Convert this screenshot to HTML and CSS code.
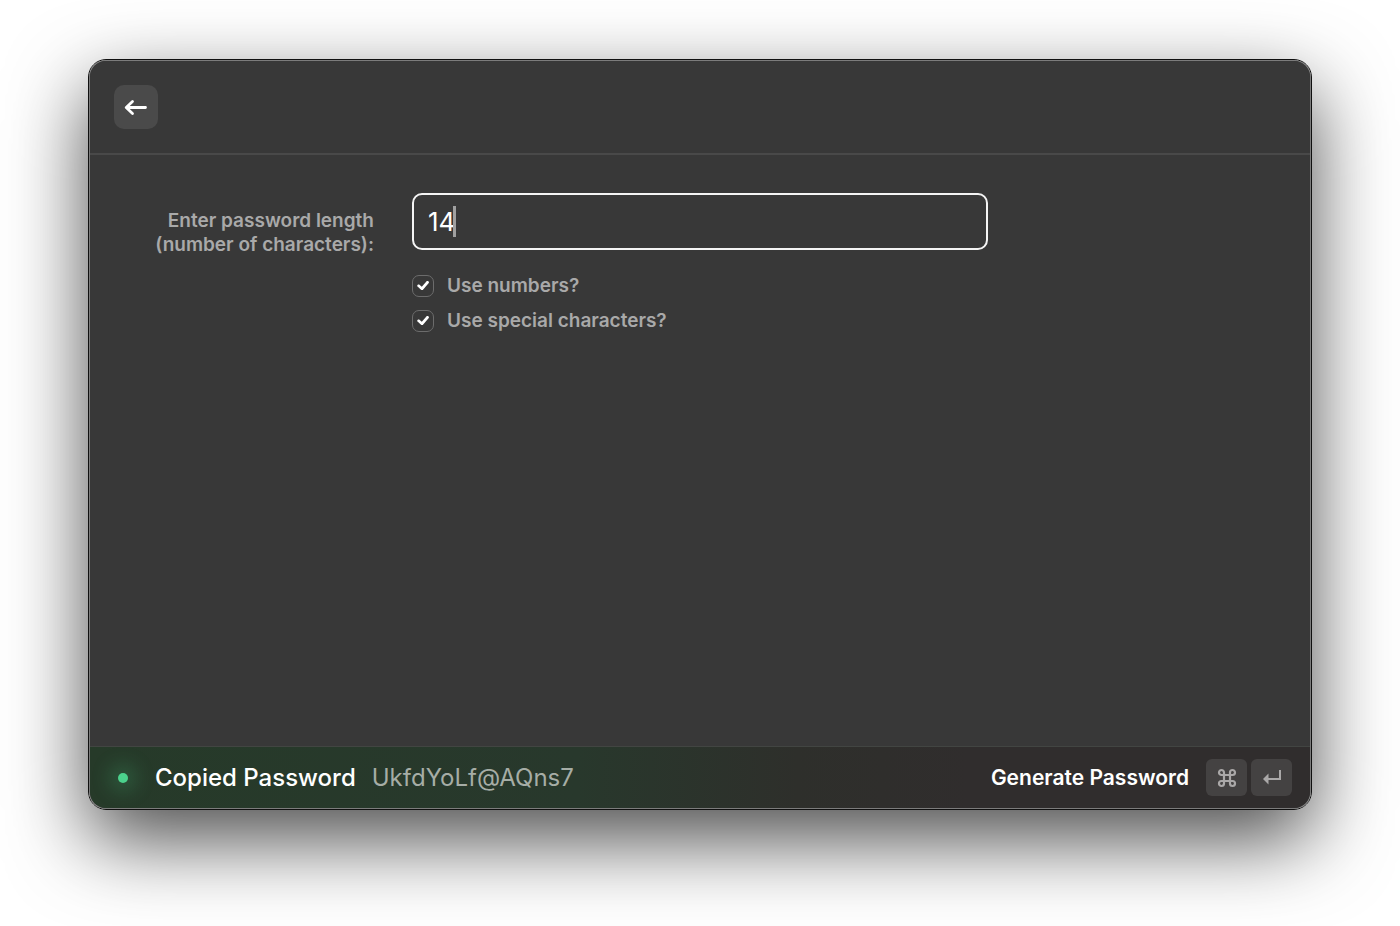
FILE: index.html
```html
<!DOCTYPE html>
<html lang="en">
<head>
    <meta charset="UTF-8">
    <meta name="viewport" content="width=device-width, initial-scale=1.0">
    <title>Generate Password</title>
    <link rel="stylesheet" href="styles.css">
</head>
<body>

<main class="window">
    <header class="top-bar">
        <button type="button" class="back-button" aria-label="Back">
            <svg width="24" height="18" viewBox="0 0 24 18" fill="none" stroke="currentColor" stroke-width="2.8" stroke-linecap="round" stroke-linejoin="round">
                <path d="M21.5 9.5H2.5M8.5 3.5L2.2 9.5l6.3 6"/>
            </svg>
        </button>
    </header>

    <form id="passwordForm" class="password-form">
        <label for="length" class="length-label">Enter password length<br>(number of characters):</label>
        <div class="fields">
            <div class="length-box">
                <input type="text" id="length" class="length-input" value="14" inputmode="numeric">
                <span class="caret"></span>
            </div>
            <div class="check-row">
                <input type="checkbox" id="useNumbers" checked>
                <label for="useNumbers">Use numbers?</label>
            </div>
            <div class="check-row">
                <input type="checkbox" id="useSpecial" checked>
                <label for="useSpecial">Use special characters?</label>
            </div>
        </div>
    </form>

    <footer class="action-bar">
        <span class="status-dot"></span>
        <span class="status-title">Copied Password</span>
        <span class="status-value">UkfdYoLf@AQns7</span>
        <button type="submit" form="passwordForm" class="generate-button">
            <span class="generate-text">Generate Password</span>
            <span class="key">
                <svg width="20" height="20" viewBox="0 0 20 20" fill="none" stroke="currentColor" stroke-width="2.2">
                    <path d="M7 7v6M13 7v6M7 7h6M7 13h6M7 7H4.5A2.5 2.5 0 1 1 7 4.5zM13 7V4.5A2.5 2.5 0 1 1 15.5 7zM7 13v2.5A2.5 2.5 0 1 1 4.5 13zM13 13h2.5A2.5 2.5 0 1 1 13 15.5z"/>
                </svg>
            </span>
            <span class="key">
                <svg width="20" height="18" viewBox="0 0 20 18" fill="none" stroke="currentColor" stroke-width="2">
                    <path d="M18 1v9H5"/>
                    <path d="M6.5 4.5L1 10l5.5 5.5z" fill="currentColor" stroke="none"/>
                </svg>
            </span>
        </button>
    </footer>
</main>

<script>
    document.getElementById("passwordForm").addEventListener("submit", function(event) {
        event.preventDefault();
    });
</script>

</body>
</html>
```
FILE: styles.css
```css
* {
    box-sizing: border-box;
}
body {
    margin: 0;
    padding: 59px 88px 116px;
    min-height: 100vh;
    display: flex;
    background: white;
    font-family: Inter, sans-serif;
    color: white;
}
.window {
    flex: 1;
    display: flex;
    flex-direction: column;
    overflow: hidden;
    padding: 1px;
    border: 1px solid #101010;
    border-radius: 18px;
    background-image: linear-gradient(#383838, #383838), linear-gradient(#7c7c7c, #7c7c7c);
    background-clip: content-box, padding-box;
    box-shadow: 0 30px 80px rgba(0, 0, 0, 0.7);
}
.top-bar {
    height: 94px;
    padding: 24px;
    border-bottom: 2px solid #494949;
    border-radius: 16px 16px 0 0;
    background: #383838;
}
.back-button {
    display: flex;
    align-items: center;
    justify-content: center;
    width: 44px;
    height: 44px;
    padding: 0;
    border: none;
    border-radius: 10px;
    background: #4a4a4a;
    color: white;
    cursor: pointer;
}
.password-form {
    flex: 1;
    display: grid;
    grid-template-columns: 284px 576px;
    gap: 38px;
    align-items: start;
    padding-top: 38px;
    font-size: 19px;
    line-height: 24px;
    font-weight: 600;
    color: #a9a9a9;
}
.length-label {
    padding-top: 16px;
    text-align: right;
}
.length-box {
    position: relative;
    margin-bottom: 18px;
}
.length-input {
    display: block;
    width: 100%;
    height: 57px;
    padding: 0 14px;
    border: 2px solid #f4f4f4;
    border-radius: 10px;
    outline: none;
    background: transparent;
    color: white;
    font-family: inherit;
    font-size: 26px;
}
.caret {
    position: absolute;
    left: 41px;
    top: 13px;
    width: 3px;
    height: 31px;
    background: #a0a0a0;
}
.check-row {
    display: flex;
    align-items: center;
    gap: 13px;
    height: 35px;
}
.check-row input {
    appearance: none;
    width: 22px;
    height: 22px;
    margin: 0;
    display: grid;
    place-items: center;
    border: 1px solid #6c6c6c;
    border-radius: 7px;
}
.check-row input:checked::before {
    content: "";
    width: 12px;
    height: 10px;
    background: white;
    clip-path: polygon(0 56%, 8% 40%, 18% 40%, 40% 62%, 82% 6%, 92% 4%, 100% 14%, 98% 24%, 48% 94%, 36% 96%);
}
.action-bar {
    display: flex;
    align-items: center;
    height: 62px;
    padding: 0 18px 0 28px;
    border-top: 1px solid #424542;
    border-radius: 0 0 16px 16px;
    background: linear-gradient(90deg, #263a29 0%, #28382c 40%, #2e2f2b 58%, #302d2d 72%, #302d2d 100%);
    font-size: 24px;
}
.status-dot {
    width: 10px;
    height: 10px;
    border-radius: 50%;
    background: #4bd18c;
    box-shadow: 0 0 20px 8px rgba(75, 209, 140, 0.24);
}
.status-title {
    margin-left: 27px;
    font-weight: 500;
}
.status-value {
    margin-left: 16px;
    color: #a6ada6;
}
.generate-button {
    display: flex;
    align-items: center;
    gap: 4px;
    margin-left: auto;
    padding: 0;
    border: none;
    background: none;
    color: white;
    font-family: inherit;
    font-size: 21px;
    font-weight: 600;
    cursor: pointer;
}
.generate-text {
    margin-right: 13px;
}
.key {
    display: flex;
    align-items: center;
    justify-content: center;
    width: 41px;
    height: 37px;
    border-radius: 6px;
    background: #444242;
    color: #aaa8a8;
}
```
